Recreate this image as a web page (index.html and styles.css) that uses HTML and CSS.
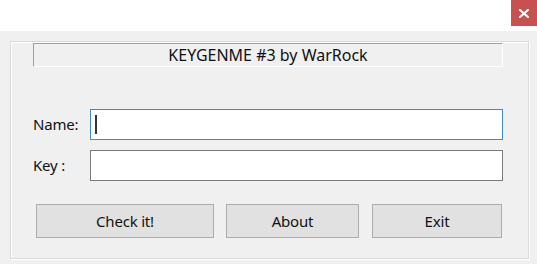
FILE: index.html
```html
<!DOCTYPE html>
<html>
<head>
<meta charset="utf-8">
<link rel="stylesheet" href="styles.css">
</head>
<body>
<div class="titlebar">
  <div class="close"><svg width="10" height="9" viewBox="0 0 10 9"><path d="M1 1 L9 8 M9 1 L1 8" stroke="#fff" stroke-width="2.2" stroke-linecap="square"/></svg></div>
</div>
<div class="client">
  <div class="group">
    <div class="caption">KEYGENME #3 by WarRock</div>
    <div class="fields">
      <label class="lbl">Name:</label>
      <div class="edit focused"><span class="caret"></span></div>
      <label class="lbl">Key :</label>
      <div class="edit"></div>
    </div>
    <div class="buttons">
      <div class="btn b-check">Check it!</div>
      <div class="btn b-about">About</div>
      <div class="btn b-exit">Exit</div>
    </div>
  </div>
</div>
</body>
</html>
```
FILE: styles.css
```css
* { box-sizing: border-box; }
html, body { margin: 0; padding: 0; }
body {
  width: 537px;
  height: 264px;
  background: #f0f0f0;
  font-family: "Noto Sans", "DejaVu Sans", sans-serif;
  font-size: 15px;
  letter-spacing: -0.2px;
  color: #111111;
  overflow: hidden;
}
.titlebar {
  height: 31px;
  background: #ffffff;
  display: flex;
  justify-content: flex-end;
}
.close {
  width: 26px;
  height: 26px;
  background: #c75050;
  display: flex;
  align-items: center;
  justify-content: center;
}
.client {
  padding: 10px 8px 0 10px;
}
.group {
  height: 218px;
  border: 1px solid #dadada;
  box-shadow: inset 1px 1px 0 #ffffff, 1px 1px 0 #ffffff;
  padding: 1px 25px 0 22px;
}
.caption {
  height: 24px;
  border-top: 1px solid #a0a0a0;
  border-left: 1px solid #a0a0a0;
  border-bottom: 1px solid #ffffff;
  border-right: 1px solid #ffffff;
  display: flex;
  align-items: center;
  justify-content: center;
  line-height: 1;
  font-size: 16px;
  letter-spacing: 0;
}
.fields {
  margin-top: 42px;
  display: grid;
  grid-template-columns: 57px 1fr;
  row-gap: 10px;
  align-items: center;
}
.lbl { line-height: 1; }
.edit {
  height: 31px;
  background: #ffffff;
  border: 1px solid #7a7a7a;
  position: relative;
}
.edit.focused { border-color: #3c8ccc; }
.caret {
  position: absolute;
  left: 4px;
  top: 5px;
  width: 2px;
  height: 19px;
  background: #333;
}
.buttons {
  margin-top: 23px;
  margin-left: 3px;
  display: flex;
  gap: 12px;
}
.btn {
  height: 34px;
  background: #e1e1e1;
  border: 1px solid #adadad;
  display: flex;
  align-items: center;
  justify-content: center;
}
.b-check { width: 178px; }
.b-about { width: 133px; }
.b-exit { width: 130px; margin-left: 1px; }
```
